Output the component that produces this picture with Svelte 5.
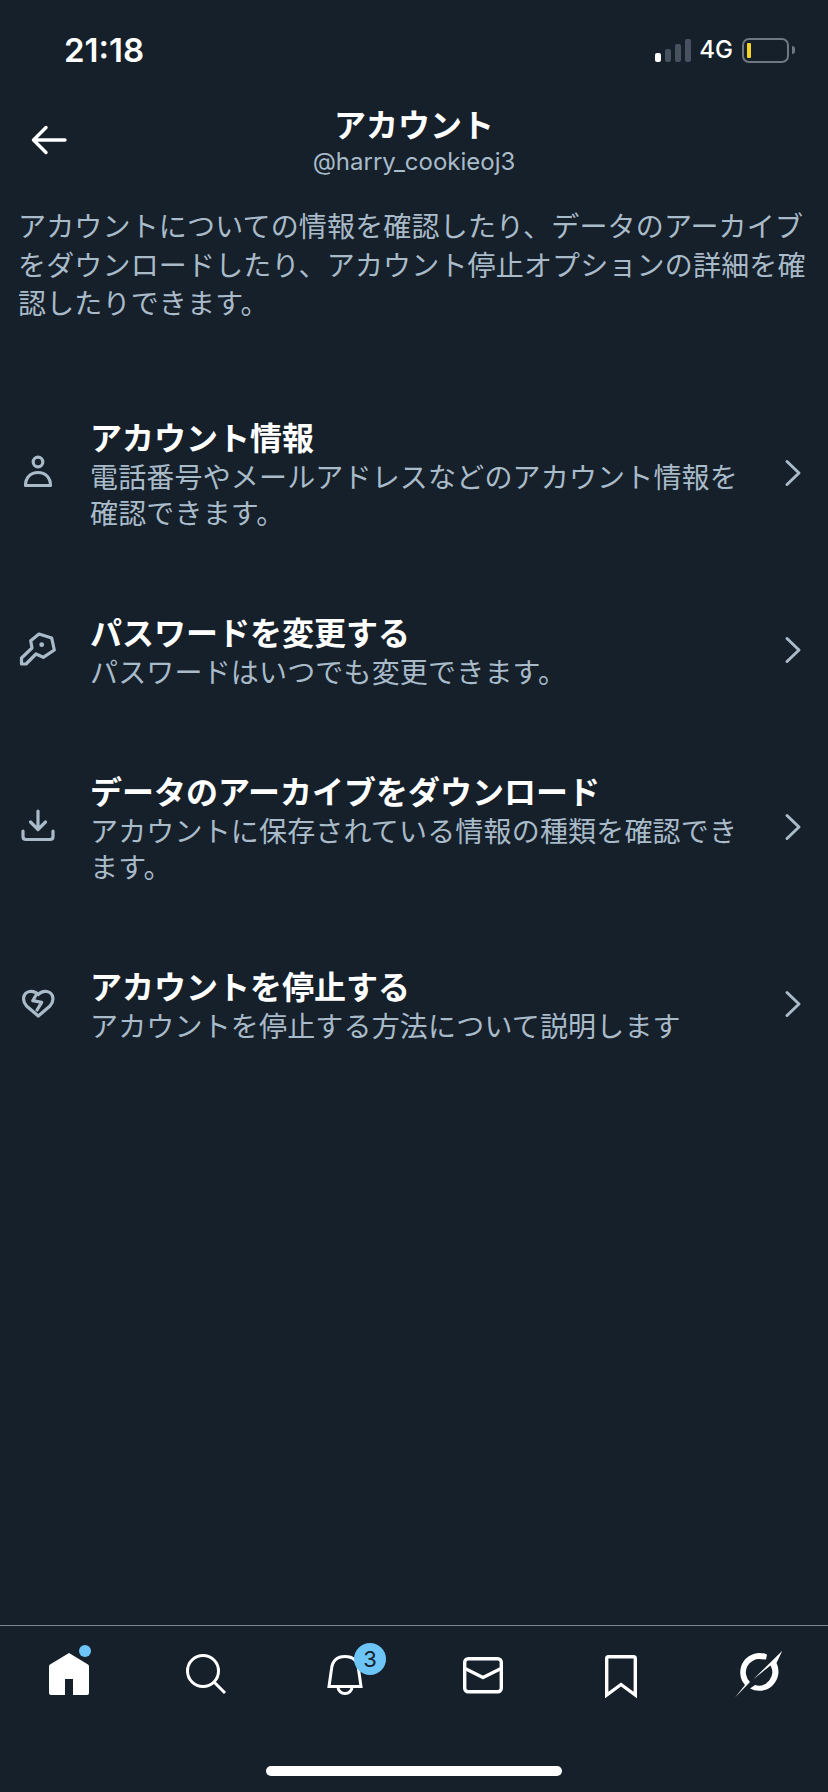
<script lang="ts">
	const rows = [
		{ id: 'person', title: 'アカウント情報', sub: '電話番号やメールアドレスなどのアカウント情報を確認できます。' },
		{ id: 'key', title: 'パスワードを変更する', sub: 'パスワードはいつでも変更できます。' },
		{ id: 'download', title: 'データのアーカイブをダウンロード', sub: 'アカウントに保存されている情報の種類を確認できます。' },
		{ id: 'heart', title: 'アカウントを停止する', sub: 'アカウントを停止する方法について説明します' },
	];
</script>

<div class="screen">
	<div class="status">
		<span class="time">21:18</span>
		<div class="status-right">
			<div class="signal">
				<i class="on" style="height:9px"></i>
				<i style="height:13px"></i>
				<i style="height:18px"></i>
				<i style="height:23px"></i>
			</div>
			<span class="net">4G</span>
			<div class="battery"><i></i></div>
			<div class="nub"></div>
		</div>
	</div>

	<header class="head">
		<button class="back" aria-label="戻る">
			<svg viewBox="0 0 36 30" width="36" height="30" fill="none" stroke="#fff" stroke-width="3.4" stroke-linecap="round" stroke-linejoin="round">
				<path d="M34 15H3M15 2.5 2.5 15 15 27.5" />
			</svg>
		</button>
		<div class="title">アカウント</div>
		<div class="handle">@harry_cookieoj3</div>
	</header>

	<p class="intro">アカウントについての情報を確認したり、データのアーカイブをダウンロードしたり、アカウント停止オプションの詳細を確認したりできます。</p>

	<div class="list">
		{#each rows as row}
			<div class="row">
				<div class="row-icon">
					<svg viewBox="0 0 40 40" width="40" height="40" fill="none" stroke="#a9bac8" stroke-width="3.2" stroke-linejoin="round" stroke-linecap="round">
						{#if row.id === 'person'}
							<circle cx="20" cy="9" r="4.800" />
							<path d="M7.500 32.500c0-8 5-13 12.500-13s12.500 5 12.500 13Z" />
						{:else if row.id === 'key'}
							<path d="M21 4 33.700 8 36.300 20 25.300 27.300 18 24 8 34H3.500V28L14 18 12.700 10.700Z" />
							<circle cx="23.700" cy="14.700" r="2.400" fill="#a9bac8" stroke="none" />
						{:else if row.id === 'download'}
							<path d="M20 4v18M12.500 15 20 22.500 27.500 15" />
							<path d="M5 24v5.500q0 3 3 3h24q3 0 3-3V24" />
						{:else}
							<path d="M20.300 32 8.500 22C4 17 4.500 9 11.500 7.500c3.500-.7 6.500.5 8.800 3 2.200-2.500 5.200-3.700 8.700-3C36 9 36.500 17 32 22Z" />
							<path d="M18.700 10 14.700 16.700 23.700 18.300 19 26" />
						{/if}
					</svg>
				</div>
				<div class="row-text">
					<div class="row-title">{row.title}</div>
					<div class="row-sub">{row.sub}</div>
				</div>
				<svg class="chev" viewBox="0 0 18 28" width="18" height="28" fill="none" stroke="#a9bac8" stroke-width="3" stroke-linecap="round" stroke-linejoin="round">
					<path d="M3 2.500 15 14 3 25.500" />
				</svg>
			</div>
		{/each}
	</div>

	<div class="spacer"></div>

	<nav class="tabs">
		<div class="tab">
			<svg viewBox="0 0 48 48" width="48" height="48" fill="#fff">
				<path d="M24 3 43 14.500q1 .6 1 2V43a2 2 0 0 1-2 2H28V29h-8v16H6a2 2 0 0 1-2-2V16.500q0-1.400 1-2Z" />
			</svg>
			<span class="dot"></span>
		</div>
		<div class="tab">
			<svg viewBox="0 0 48 48" width="48" height="48" fill="none" stroke="#fff" stroke-width="3">
				<circle cx="20" cy="21" r="15.500" />
				<path d="M31 32 42 43" />
			</svg>
		</div>
		<div class="tab">
			<svg viewBox="0 0 48 48" width="48" height="48" fill="none" stroke="#fff" stroke-width="3">
				<path d="M8 36.500 10.500 19C11.500 10 17 6.500 24 6.500S36.500 10 37.500 19L40 36.500Z" />
				<path d="M17 37a7 6.500 0 0 0 14 0" />
			</svg>
			<span class="badge">3</span>
		</div>
		<div class="tab">
			<svg viewBox="0 0 48 48" width="48" height="48" fill="none" stroke="#fff" stroke-width="3.400" stroke-linejoin="round">
				<rect x="5.700" y="8.700" width="36.600" height="33" rx="3.500" />
				<path d="M5 18 24 27.500 43 18" />
			</svg>
		</div>
		<div class="tab">
			<svg viewBox="0 0 48 48" width="48" height="48" fill="none" stroke="#fff" stroke-width="3.400">
				<path d="M9.700 45V8.500q0-1.800 1.800-1.800h25q1.800 0 1.800 1.800V45L24 34.500Z" />
			</svg>
		</div>
		<div class="tab">
			<svg viewBox="0 0 48 48" width="48" height="48" fill="#fff">
				<path d="M47.300.7 41.500 13A19.300 19.300 0 0 1 15 38.500L20 35A13.500 13.500 0 0 0 35.500 15.500L18.300 29.300Z" />
				<path d="M0 47.500 10 35A19.300 19.300 0 0 1 32 4.500L31 9.500 26.700 9.300A13.300 13.300 0 0 0 15 32Z" />
			</svg>
		</div>
	</nav>

	<div class="home-bar"><span></span></div>
</div>

<style>
	:global(body) { margin: 0; background: #15202b; }

	.screen {
		display: flex;
		flex-direction: column;
		height: 1792px;
		background: #15202b;
		color: #fff;
		font-family: "Noto Sans CJK JP", "Inter", sans-serif;
		overflow: hidden;
	}

	/* status bar */
	.status { display: flex; align-items: center; justify-content: space-between; height: 100px; padding: 0 33px 0 64px; box-sizing: border-box; }
	.time { font: 600 33px/1 "Inter", sans-serif; }
	.status-right { display: flex; align-items: center; }
	.signal { display: flex; align-items: flex-end; gap: 3.500px; height: 23px; margin-right: 8px; }
	.signal i { display: block; width: 6.500px; background: #46525f; border-radius: 2px; }
	.signal i.on { background: #fff; }
	.net { font: 500 24px/1 "Inter", sans-serif; margin-right: 9px; }
	.battery { width: 47px; height: 25px; box-sizing: border-box; border: 2.500px solid #6f7882; border-radius: 7px; padding: 3px; display: flex; }
	.battery i { display: block; width: 4px; height: 100%; background: #f5d327; border-radius: 1px; }
	.nub { width: 3px; height: 8px; background: #6f7882; margin-left: 3px; border-radius: 0 3px 3px 0; }

	/* header */
	.head { position: relative; display: flex; flex-direction: column; align-items: center; height: 106px; }
	.back { position: absolute; left: 31px; top: 25px; padding: 0; border: 0; background: none; line-height: 0; }
	.title { font-size: 32px; font-weight: 700; line-height: 42px; margin-top: 2px; }
	.handle { font: 400 24px/34px "Inter", sans-serif; color: #a9bac8; margin-top: 1px; }

	.intro { margin: 0; padding: 0 18px; font-size: 28px; line-height: 38.500px; letter-spacing: .17px; color: #a9bac8; }

	/* rows */
	.list { display: flex; flex-direction: column; gap: 82px; padding-top: 95px; }
	.row { display: flex; align-items: center; padding-left: 18px; }
	.row-icon { width: 40px; height: 40px; flex: 0 0 auto; }
	.row-text { width: 660px; margin-left: 32px; }
	.row-title { font-size: 32px; font-weight: 700; line-height: 38px; margin-bottom: 3px; }
	.row-sub { font-size: 28px; line-height: 36px; letter-spacing: .17px; color: #a9bac8; }
	.chev { flex: 0 0 auto; margin-left: 34px; }

	.spacer { flex: 1; }

	/* tab bar */
	.tabs { display: grid; grid-template-columns: repeat(6, 138px); padding-top: 24px; height: 108px; box-sizing: border-box; border-top: 1px solid #7d8791; }
	.tab { position: relative; display: flex; justify-content: center; height: 48px; }
	.dot { position: absolute; left: 79px; top: -5px; width: 12px; height: 12px; border-radius: 50%; background: #6cc4f7; }
	.badge { position: absolute; left: 78px; top: -7px; width: 32px; height: 32px; border-radius: 50%; background: #6cc4f7; color: #15202b; font: 400 22px/32px "Inter", sans-serif; text-align: center; }

	.home-bar { display: flex; justify-content: center; height: 59px; box-sizing: border-box; padding-top: 33px; }
	.home-bar span { display: block; width: 296px; height: 10px; border-radius: 5px; background: #fff; }
</style>
